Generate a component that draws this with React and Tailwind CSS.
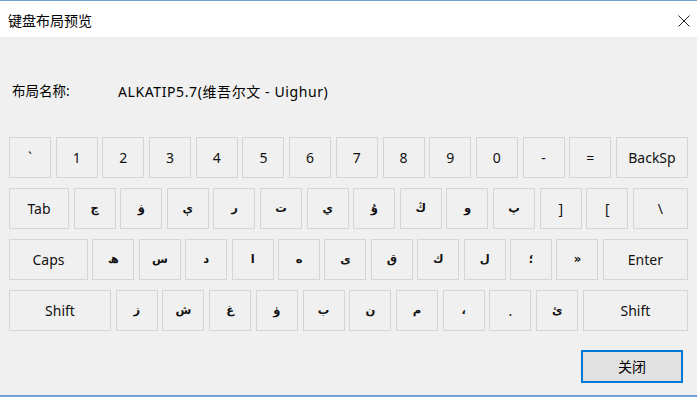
const FONT = { fontFamily: '"Noto Sans", "Noto Sans CJK SC", sans-serif' };
const ARABIC = { fontFamily: '"DejaVu Sans", sans-serif' };

const rows = [
  [
    { k: "`" }, { k: "1" }, { k: "2" }, { k: "3" }, { k: "4" }, { k: "5" }, { k: "6" },
    { k: "7" }, { k: "8" }, { k: "9" }, { k: "0" }, { k: "-" }, { k: "=" },
    { k: "BackSp", w: "w-[72px]" },
  ],
  [
    { k: "Tab", w: "w-[60px]" },
    { k: "چ", ar: true }, { k: "ۋ", ar: true }, { k: "ې", ar: true }, { k: "ر", ar: true },
    { k: "ت", ar: true }, { k: "ي", ar: true }, { k: "ۇ", ar: true }, { k: "ڭ", ar: true },
    { k: "و", ar: true }, { k: "پ", ar: true }, { k: "]" }, { k: "[" },
    { k: "\\", w: "w-[55px]" },
  ],
  [
    { k: "Caps", w: "w-[79px]" },
    { k: "ھ", ar: true }, { k: "س", ar: true }, { k: "د", ar: true }, { k: "ا", ar: true },
    { k: "ە", ar: true }, { k: "ى", ar: true }, { k: "ق", ar: true }, { k: "ك", ar: true },
    { k: "ل", ar: true }, { k: "؛", ar: true }, { k: "»", ar: true },
    { k: "Enter", w: "w-[85px]" },
  ],
  [
    { k: "Shift", w: "w-[102px]" },
    { k: "ز", ar: true }, { k: "ش", ar: true }, { k: "غ", ar: true }, { k: "ۈ", ar: true },
    { k: "ب", ar: true }, { k: "ن", ar: true }, { k: "م", ar: true }, { k: "،", ar: true },
    { k: "." }, { k: "ئ", ar: true },
    { k: "Shift", w: "w-[105px]" },
  ],
];

function Key({ k, w, ar }) {
  return (
    <div
      className={
        "h-[41px] flex items-center justify-center border border-[#d5d5d5] bg-[#f0f0f0] text-[#111] " +
        (w || "w-[42px]") +
        (ar ? " text-[11.5px] font-bold" : " text-[14px]")
      }
      style={ar ? ARABIC : undefined}
    >
      {k}
    </div>
  );
}

export default function App() {
  return (
    <div
      className="w-[697px] h-[397px] flex flex-col bg-[#f0f0f0] border-t border-b-2 border-[#6f9ed9] text-black"
      style={FONT}
    >
      <div className="h-[36px] bg-white flex items-center justify-between pl-[8px] pr-[7px] pt-[3px]">
        <span className="text-[14px]">键盘布局预览</span>
        <svg width="12" height="12" viewBox="0 0 12 12">
          <path d="M0.5 0.5 L11.5 11.5 M11.5 0.5 L0.5 11.5" stroke="#222" strokeWidth="1" fill="none" />
        </svg>
      </div>

      <div className="mt-[44px] h-[20px] flex items-center pl-[12px]">
        <span className="w-[106px] text-[13.5px]">布局名称:</span>
        <span className="text-[14px] tracking-[0.6px]">ALKATIP5.7(维吾尔文 - Uighur)</span>
      </div>

      <div className="mt-[36px] px-[9px] flex flex-col gap-[10px]">
        {rows.map((row, i) => (
          <div key={i} className="flex justify-between">
            {row.map((key, j) => (
              <Key key={j} {...key} />
            ))}
          </div>
        ))}
      </div>

      <div className="mt-[19px] flex justify-end pr-[14px]">
        <button className="w-[102px] h-[33px] border-2 border-[#0078d7] bg-[#e1e1e1] text-[14px]">
          关闭
        </button>
      </div>
    </div>
  );
}
